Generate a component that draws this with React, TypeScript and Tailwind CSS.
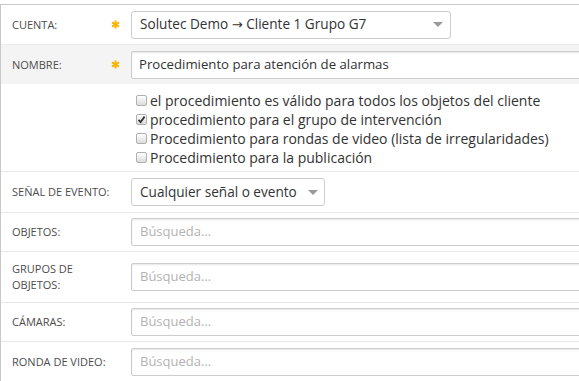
import React from 'react';

const Star = () => (
    <span className="w-[9px] flex items-center justify-center shrink-0">
        <svg width="9" height="9" viewBox="0 0 10 10">
            <g stroke="#f6b300" strokeWidth="2.2" strokeLinecap="butt">
                <line x1="5" y1="0.5" x2="5" y2="9.5" />
                <line x1="1.1" y1="2.75" x2="8.9" y2="7.25" />
                <line x1="1.1" y1="7.25" x2="8.9" y2="2.75" />
            </g>
        </svg>
    </span>
);

const Caret = () => (
    <span className="w-0 h-0 border-x-[5px] border-x-transparent border-t-[5px] border-t-[#9a9a9a]" />
);

interface RowProps {
    label?: string;
    required?: boolean;
    className?: string;
    children: React.ReactNode;
}

const Row: React.FC<RowProps> = ({ label, required, className = '', children }) => (
    <div className={`flex items-center ${className}`}>
        <div className="w-[130px] shrink-0 flex items-center pl-[11px] pr-[11px]">
            <span className="flex-1 text-[11px] leading-[16px] uppercase text-[#4d4d4d] pr-1">{label}</span>
            {required && <Star />}
        </div>
        <div className="flex-1 min-w-0">{children}</div>
    </div>
);

const SearchInput = () => (
    <div className="h-[28px] w-[460px] border border-[#ccc] rounded-[2px] bg-white shadow-[inset_0_1px_2px_rgba(0,0,0,0.1)] flex items-center pl-[8px] text-[13px] text-[#b3b3b3]">
        Búsqueda…
    </div>
);

const Checkbox = ({ checked, text }: { checked?: boolean; text: string }) => (
    <div className="flex items-center h-[19px]">
        <span className="ml-[5px] w-[11px] h-[11px] rounded-[2px] border border-[#b0b0b0] bg-gradient-to-b from-white to-[#dcdcdc] flex items-center justify-center shrink-0">
            {checked && (
                <svg width="9" height="9" viewBox="0 0 9 9">
                    <path d="M1.5 4.8 L3.6 7 L7.6 1.6" fill="none" stroke="#333" strokeWidth="1.8" />
                </svg>
            )}
        </span>
        <span className="ml-[3px] text-[14px] text-[#333] whitespace-nowrap">{text}</span>
    </div>
);

export default function App() {
    return (
        <div className="min-h-screen bg-white pt-[4px] font-['Open_Sans',sans-serif]">
            <div className="border-l border-t border-[#c8c8c8]">
                <Row label="Cuenta:" required className="h-[39px]">
                    <div className="h-[28px] w-[320px] border border-[#ccc] rounded-[3px] bg-white flex items-center justify-between pl-[8px] pr-[7px] text-[13.6px] text-[#333]">
                        <span>
                            Solutec Demo <span className="font-['DejaVu_Sans',sans-serif] text-[13px]">→</span> Cliente 1 Grupo G7
                        </span>
                        <Caret />
                    </div>
                </Row>
                <Row label="Nombre:" required className="h-[40px] bg-[#f4f4f4] border-t border-[#ececec]">
                    <div className="h-[28px] w-[460px] border border-[#ccc] rounded-[2px] bg-white shadow-[inset_0_1px_2px_rgba(0,0,0,0.1)] flex items-center pl-[7px] text-[13.2px] text-[#333]">
                        Procedimiento para atención de alarmas
                    </div>
                </Row>
                <Row className="h-[88px] border-b border-[#e8e8e8] !items-start">
                    <div className="flex flex-col pt-[7px]">
                        <Checkbox text="el procedimiento es válido para todos los objetos del cliente" />
                        <Checkbox checked text="procedimiento para el grupo de intervención" />
                        <Checkbox text="Procedimiento para rondas de video (lista de irregularidades)" />
                        <Checkbox text="Procedimiento para la publicación" />
                    </div>
                </Row>
                <Row label="Señal de evento:" className="h-[41px] border-b border-[#e8e8e8]">
                    <div className="h-[28px] w-[194px] border border-[#ccc] rounded-[3px] bg-white flex items-center justify-between pl-[8px] pr-[6px] text-[13.6px] text-[#333]">
                        <span>Cualquier señal o evento</span>
                        <Caret />
                    </div>
                </Row>
                <Row label="Objetos:" className="h-[39px] border-b border-[#e8e8e8]">
                    <SearchInput />
                </Row>
                <Row label="Grupos de objetos:" className="h-[51px] border-b border-[#e8e8e8]">
                    <SearchInput />
                </Row>
                <Row label="Cámaras:" className="h-[39px] border-b border-[#e8e8e8]">
                    <SearchInput />
                </Row>
                <Row label="Ronda de video:" className="h-[40px]">
                    <SearchInput />
                </Row>
            </div>
        </div>
    );
}
